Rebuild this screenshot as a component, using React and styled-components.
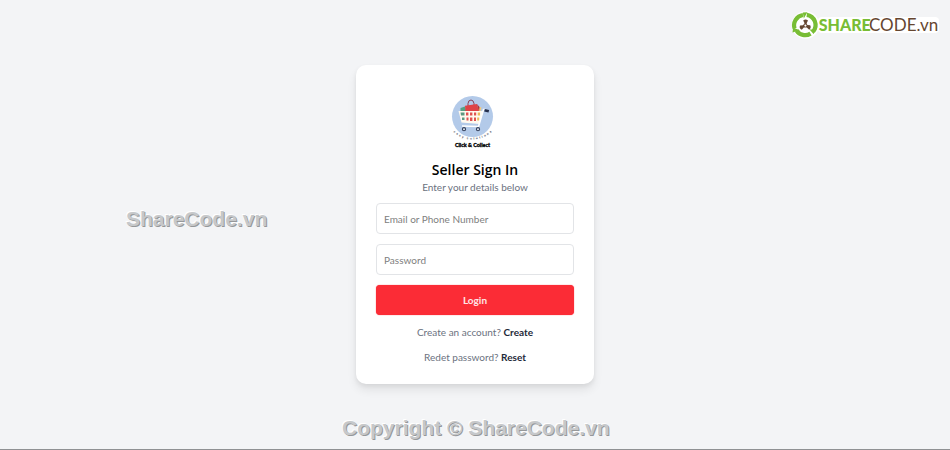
import React from "react";
import styled, { createGlobalStyle } from "styled-components";

const GlobalStyle = createGlobalStyle`
  *, *::before, *::after { box-sizing: border-box; }
  body { margin: 0; background: #f3f4f6; }
  body, input, button { font-family: Lato, "Open Sans", sans-serif; }
`;

const Page = styled.div`
  position: relative;
  min-height: 100vh;
  display: flex;
  align-items: center;
  justify-content: center;
  background: #f3f4f6;
  border-bottom: 1px solid #8f9193;
`;

const Card = styled.main`
  width: 25%;
  min-width: 238px;
  padding: 28px 20px 19px;
  display: flex;
  flex-direction: column;
  align-items: center;
  background: #fff;
  border-radius: 10px;
  box-shadow: 0 6px 10px rgba(0, 0, 0, 0.08), 0 2px 4px rgba(0, 0, 0, 0.06);
`;

const StoreLogo = styled.svg`
  width: 60px;
  height: 60px;
  margin-bottom: 7px;
`;

const Title = styled.h1`
  margin: 0;
  font-family: "Open Sans", "Noto Sans", sans-serif;
  font-size: 14px;
  line-height: 20px;
  font-weight: 600;
  color: #000;
`;

const Subtitle = styled.p`
  margin: 0 0 9px;
  font-size: 10px;
  line-height: 14px;
  color: #6b7280;
`;

const Form = styled.form`
  width: 100%;
  display: flex;
  flex-direction: column;
  gap: 10px;
`;

const Field = styled.input`
  width: 100%;
  height: 31px;
  padding: 0 7px;
  font-size: 10px;
  color: #1f2937;
  background: #fff;
  border: 1px solid #e2e4e7;
  border-radius: 4px;
  &::placeholder { color: #808080; opacity: 1; }
`;

const LoginButton = styled.button`
  height: 30px;
  font-size: 10px;
  font-weight: 700;
  color: #ffe4e6;
  background: #fb2c36;
  border: 0;
  border-radius: 4px;
  box-shadow: 0 0 1px #fb2c36;
  cursor: pointer;
`;

const Prompt = styled.p`
  margin: 10px 0 0;
  font-size: 10px;
  line-height: 15px;
  color: #6b7280;
`;

const PromptLink = styled.a`
  font-weight: 700;
  color: #1e2939;
  text-decoration: none;
`;

const Brand = styled.a`
  position: absolute;
  top: 10px;
  right: 8px;
  text-decoration: none;
`;

const BrandLogo = styled.svg`
  display: block;
  width: 151px;
  height: 30px;
`;

const Watermark = styled.span`
  position: absolute;
  left: ${({ $left }) => $left};
  top: ${({ $top }) => $top};
  font: bold 21px/24px "Liberation Sans", Arial, sans-serif;
  white-space: nowrap;
  color: #c6c8ca;
  text-shadow: 1px 1px 0 #96989a, -1px -1px 0 #fff;
  pointer-events: none;
`;

function CartLogo() {
  return (
    <StoreLogo viewBox="0 0 60 60" role="img" aria-label="Click & Collect">
      <defs>
        <path id="tagline" d="M5.5 36 A28.3 28.3 0 0 0 49.5 36" />
      </defs>
      <circle cx="27.5" cy="23.5" r="20.5" fill="#b3cae9" />
      <path d="M23 14 V10.5 Q23.3 7 26 7 Q28.5 7 29 10.5 V14" fill="none" stroke="#8a4057" strokeWidth="1" />
      <path d="M15.5 15 L20 13.5 L22 20 H15.5Z" fill="#55a184" />
      <path d="M31 13 L36.5 14.5 L35 20 H29Z" fill="#f2c879" />
      <path d="M20 12.8 L32 11 L34 19 H20.5Z" fill="#df4347" />
      <path d="M32 11 L34.5 14 L34 19Z" fill="#a93442" />
      <path d="M13.5 18 H38 L34.5 31 L16.5 29.5Z" fill="#fffaf0" />
      <path d="M15.5 19.5 h4 v3 h-3.5z M17 24.5 h2.5 v2.5 h-2.5z" fill="#5b9a82" />
      <path d="M21 19.5 h2.4 v3 h-2.4z M25 19.5 h2.4 v3 h-2.4z M29 19.5 h2.2 v3 h-2.2z M21.5 24.5 h2 v3 h-2z M25 24.5 h2.4 v3.5 h-2.4z M29 24.5 h2 v3.5 h-2z" fill="#e05250" />
      <path d="M32.7 19.5 h2.3 v3 h-2.3z M32.2 24.5 h2 v3 h-2z" fill="#edb85c" />
      <path d="M40.5 16.5 H38.5 L33.5 33.5 L17 33" fill="none" stroke="#fff" strokeWidth="1.6" strokeLinejoin="round" />
      <path d="M39.5 17.2 L43.8 18.3" stroke="#252f4c" strokeWidth="2.6" />
      <circle cx="19" cy="36.2" r="1.6" fill="#dce4ee" stroke="#35415c" strokeWidth="1.1" />
      <circle cx="33" cy="36.2" r="1.6" fill="#dce4ee" stroke="#35415c" strokeWidth="1.1" />
      <text fontFamily="Liberation Sans, sans-serif" fontSize="3" fontWeight="700" fill="#394150">
        <textPath href="#tagline" startOffset="50%" textAnchor="middle">e &#160;a &#160;s &#160;y &#160; &#160;s &#160;o &#160;l &#160;u &#160;t &#160;i &#160;o &#160;n &#160;s</textPath>
      </text>
      <text x="27.5" y="54" textAnchor="middle" fontFamily="Lato, sans-serif" fontWeight="900" fontSize="5.4" fill="#000" stroke="#000" strokeWidth="0.3">
        Click &amp; Collect
      </text>
    </StoreLogo>
  );
}

function ShareCodeLogo() {
  return (
    <BrandLogo viewBox="0 0 151 30" role="img" aria-label="SHARECODE.vn">
      <circle cx="14.5" cy="15" r="13.8" fill="#fff" />
      <rect x="27" y="7" width="121" height="16" rx="4" fill="#fff" />
      <g fill="none" stroke="#78bd35" strokeWidth="4.2">
        <path d="M3.6 18.5 A10.3 10.3 0 0 1 12 5" />
        <path d="M15.8 4.8 A10.3 10.3 0 0 1 22.2 21.5" />
        <path d="M19.5 23.6 A10.3 10.3 0 0 1 5.5 20.5" />
      </g>
      <path d="M11.8 2.5 L16.4 2.2 L12.8 8.5Z M25.3 19.5 L22.5 24 L18.5 19.5Z M1.5 22.5 L2.2 17.5 L8.5 20.2Z" fill="#78bd35" />
      <path d="M13.6 13.2 L12.2 10.6 Q14.5 8.4 17 10.6 L15.6 13.2 L16.4 15 L19.2 15.2 Q20.6 17.6 18.2 19.8 L15.8 17.6 H12.8 L10.8 19.8 Q7.8 18.6 9 15.6 L12 15.2Z" fill="#654630" />
      <circle cx="14.4" cy="15.6" r="1.1" fill="#fff" />
      <text x="27.8" y="21" fontFamily="Lato, sans-serif" fontWeight="900" fontSize="16" fill="#78bd35">SHARE</text>
      <text x="78" y="21" fontFamily="Lato, sans-serif" fontSize="17" fill="#654630">CODE.vn</text>
    </BrandLogo>
  );
}

export default function App() {
  return (
    <Page>
      <GlobalStyle />
      <Brand href="#home"><ShareCodeLogo /></Brand>
      <Card>
        <CartLogo />
        <Title>Seller Sign In</Title>
        <Subtitle>Enter your details below</Subtitle>
        <Form onSubmit={(event) => event.preventDefault()}>
          <Field type="text" aria-label="Email or Phone Number" placeholder="Email or Phone Number" />
          <Field type="password" aria-label="Password" placeholder="Password" />
          <LoginButton type="submit">Login</LoginButton>
        </Form>
        <Prompt>Create an account? <PromptLink href="#create">Create</PromptLink></Prompt>
        <Prompt>Redet password? <PromptLink href="#reset">Reset</PromptLink></Prompt>
      </Card>
      <Watermark $left="126px" $top="207px">ShareCode.vn</Watermark>
      <Watermark $left="36%" $top="416px">Copyright © ShareCode.vn</Watermark>
    </Page>
  );
}
